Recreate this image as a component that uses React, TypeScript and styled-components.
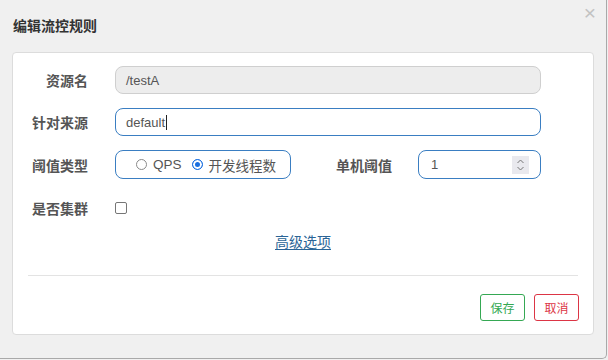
import React from "react";
import styled, { createGlobalStyle } from "styled-components";

const Global = createGlobalStyle`
  html, body { margin: 0; padding: 0; background: #f0f0f0; }
  body { font-family: "Liberation Sans", "Noto Sans CJK SC", sans-serif; }
`;

const CJK = `"Liberation Sans", "Noto Sans CJK SC", sans-serif`;

const Dialog = styled.div`
  position: relative;
  box-sizing: border-box;
  width: 607px;
  height: 359px;
  background: #f0f0f0;
  border-right: 1px solid #a9a9a9;
  border-bottom: 1px solid #a9a9a9;
  border-bottom-right-radius: 5px;
  display: flex;
  flex-direction: column;
`;

const Header = styled.div`
  height: 52px;
  display: flex;
  justify-content: space-between;
  align-items: flex-start;
  padding: 0 10px 0 13px;
`;

const Title = styled.h3`
  margin: 18px 0 0;
  font-family: ${CJK};
  font-size: 14px;
  line-height: 16px;
  font-weight: bold;
  color: #333;
`;

const Close = styled.span`
  margin-top: 4px;
  font-family: "Liberation Sans", sans-serif;
  font-size: 21px;
  line-height: 18px;
  color: #c2c2c2;
  cursor: pointer;
`;

const Card = styled.div`
  margin: 0 12px;
  box-sizing: border-box;
  height: 283px;
  background: #fff;
  border: 1px solid #dcdcdc;
  border-radius: 4px;
  padding: 13px 0 12px;
  display: flex;
  flex-direction: column;
`;

const Row = styled.div<{ $h?: number; $mt?: number }>`
  display: grid;
  grid-template-columns: 75px 1fr;
  column-gap: 27px;
  align-items: center;
  height: ${(p) => p.$h ?? 28}px;
  margin-top: ${(p) => p.$mt ?? 0}px;
  padding-right: 52px;
  padding-left: 0;
`;

const Label = styled.label`
  text-align: right;
  font-family: ${CJK};
  font-size: 14px;
  font-weight: bold;
  color: #555;
  white-space: nowrap;
`;

const Field = styled.div<{ $disabled?: boolean; $w?: number }>`
  box-sizing: border-box;
  height: 28px;
  ${(p) => (p.$w ? `width: ${p.$w}px;` : "")}
  border: 1px solid ${(p) => (p.$disabled ? "#cfcfcf" : "#3a7ec2")};
  background: ${(p) => (p.$disabled ? "#ededed" : "#fff")};
  border-radius: 8px;
  padding: 0 10px;
  display: flex;
  align-items: center;
  font-family: ${CJK};
  font-size: 13px;
  color: #555;
`;

const Caret = styled.span`
  display: inline-block;
  width: 1px;
  height: 15px;
  background: #222;
  margin-left: 1px;
`;

const Inline = styled.div`
  display: flex;
  align-items: center;
`;

const RadioBox = styled.div`
  box-sizing: border-box;
  width: 176px;
  height: 29px;
  border: 1px solid #3a7ec2;
  border-radius: 8px;
  display: flex;
  align-items: center;
  padding-left: 20px;
  gap: 10px;
  font-family: ${CJK};
  font-size: 13.5px;
  color: #555;
`;

const RadioItem = styled.span`
  display: flex;
  align-items: center;
  gap: 6px;
`;

const RadioDot = styled.span<{ $on?: boolean }>`
  box-sizing: border-box;
  width: 11px;
  height: 11px;
  border-radius: 50%;
  border: ${(p) => (p.$on ? "1px solid #1a6fe0" : "1px solid #8a8a8a")};
  background: ${(p) => (p.$on ? "#1a6fe0" : "#fff")};
  box-shadow: ${(p) => (p.$on ? "inset 0 0 0 2px #fff" : "none")};
`;

const SideLabel = styled(Label)`
  margin-left: 45px;
  margin-right: 26px;
`;

const NumberField = styled(Field)`
  height: 29px;
  justify-content: space-between;
  padding: 0 11px 0 12px;
`;

const Spinner = styled.span`
  width: 17px;
  height: 18px;
  background: #e9e9ee;
  display: flex;
  align-items: center;
  justify-content: center;
`;

const Check = styled.span`
  box-sizing: border-box;
  width: 12px;
  height: 12px;
  border: 1px solid #767676;
  border-radius: 2px;
  background: #fff;
`;

const LinkRow = styled.div`
  margin-top: 7px;
  height: 20px;
  display: flex;
  justify-content: center;
  align-items: center;
`;

const Link = styled.a`
  font-family: ${CJK};
  font-size: 14px;
  color: #2a6496;
  text-decoration: underline;
  text-underline-offset: 2px;
  cursor: pointer;
`;

const Divider = styled.hr`
  margin: 24px 15px 0;
  border: 0;
  border-top: 1px solid #e3e3e3;
  height: 0;
`;

const Footer = styled.div`
  margin-top: 18px;
  padding-right: 14px;
  display: flex;
  justify-content: flex-end;
  gap: 9px;
`;

const Btn = styled.button<{ $tone: "green" | "red" }>`
  box-sizing: border-box;
  width: 45px;
  height: 27px;
  padding: 0;
  background: #fff;
  border: 1px solid ${(p) => (p.$tone === "green" ? "#35a853" : "#dc3545")};
  color: ${(p) => (p.$tone === "green" ? "#35a853" : "#dc3545")};
  border-radius: 3px;
  font-family: ${CJK};
  font-size: 12px;
  cursor: pointer;
`;

export default function App() {
  return (
    <>
      <Global />
      <Dialog>
        <Header>
          <Title>编辑流控规则</Title>
          <Close>×</Close>
        </Header>
        <Card>
          <Row>
            <Label>资源名</Label>
            <Field $disabled>/testA</Field>
          </Row>
          <Row $mt={14}>
            <Label>针对来源</Label>
            <Field>
              default
              <Caret />
            </Field>
          </Row>
          <Row $mt={14} $h={29}>
            <Label>阈值类型</Label>
            <Inline>
              <RadioBox>
                <RadioItem>
                  <RadioDot />
                  QPS
                </RadioItem>
                <RadioItem>
                  <RadioDot $on />
                  开发线程数
                </RadioItem>
              </RadioBox>
              <SideLabel>单机阈值</SideLabel>
              <NumberField $w={123}>
                1
                <Spinner>
                  <svg width="9" height="14" viewBox="0 0 9 14" fill="none" stroke="#777" strokeWidth="1">
                    <path d="M1.5 5 L4.5 2 L7.5 5" />
                    <path d="M1.5 9 L4.5 12 L7.5 9" />
                  </svg>
                </Spinner>
              </NumberField>
            </Inline>
          </Row>
          <Row $mt={13} $h={32}>
            <Label>是否集群</Label>
            <Inline>
              <Check />
            </Inline>
          </Row>
          <LinkRow>
            <Link>高级选项</Link>
          </LinkRow>
          <Divider />
          <Footer>
            <Btn $tone="green">保存</Btn>
            <Btn $tone="red">取消</Btn>
          </Footer>
        </Card>
      </Dialog>
    </>
  );
}
